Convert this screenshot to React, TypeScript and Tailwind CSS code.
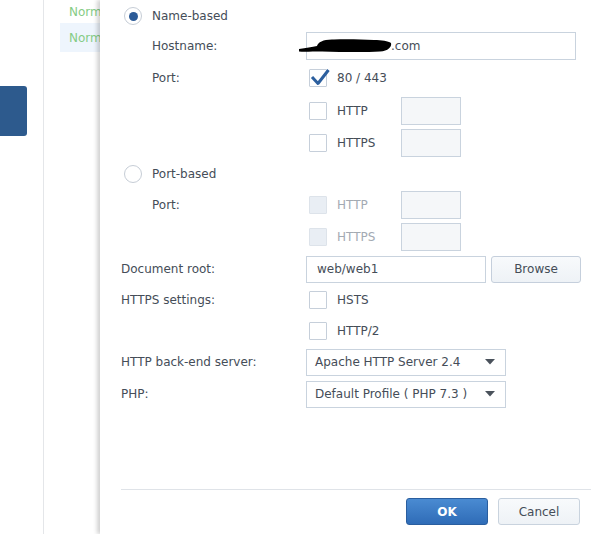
import React from "react";

const font = { fontFamily: '"DejaVu Sans", Verdana, sans-serif' };

const Checkbox = ({ checked = false, disabled = false }: { checked?: boolean; disabled?: boolean }) => (
  <div className="relative ml-[3px] shrink-0">
    <div
      className={
        disabled
          ? "w-[18px] h-[18px] rounded-[1px] border border-[#dde3ea] bg-[#e9eef4]"
          : "w-[18px] h-[18px] rounded-[1px] border border-[#c6cfda] bg-white"
      }
    />
    {checked && (
      <svg className="absolute left-[1px] top-[-1px]" width="20" height="18" viewBox="0 0 20 18">
        <path d="M2 9 L8 15.5 L18.5 2" fill="none" stroke="#2c5f9e" strokeWidth="3" strokeLinejoin="round" />
      </svg>
    )}
  </div>
);

const Radio = ({ checked = false }: { checked?: boolean }) => (
  <div className="ml-[3px] w-[18px] h-[18px] rounded-full border border-[#c6cdd6] bg-white flex items-center justify-center shrink-0">
    {checked && <div className="w-[9px] h-[9px] rounded-full bg-[#2d5c98]" />}
  </div>
);

const SmallInput = () => (
  <div className="w-[60px] h-[28px] border border-[#c9d3de] bg-[#f5f7f9]" />
);

const Select = ({ value }: { value: string }) => (
  <div className="w-[200px] h-[27px] border border-[#c9d3de] bg-white flex items-center pl-[8px] pr-[10px]">
    <span className="flex-1">{value}</span>
    <svg width="10" height="6" viewBox="0 0 10 6">
      <path d="M0 0 L10 0 L5 5.5 Z" fill="#4a525c" />
    </svg>
  </div>
);

const Row = ({
  h,
  label,
  indent = false,
  children,
}: {
  h: string;
  label?: string;
  indent?: boolean;
  children?: React.ReactNode;
}) => (
  <div className={`flex items-center ${h}`}>
    <div className={indent ? "w-[185px] pl-[31px] shrink-0" : "w-[185px] shrink-0"}>{label}</div>
    {children}
  </div>
);

export default function App() {
  return (
    <div className="w-[605px] h-[534px] flex overflow-hidden bg-white text-[12px] text-[#454d58]" style={font}>
      {/* background page */}
      <div className="w-[100px] shrink-0 flex overflow-hidden">
        <div className="w-[43px] shrink-0">
          <div className="mt-[86px] w-[27px] h-[50px] bg-[#2d5a8d] rounded-r-[3px]" />
        </div>
        <div className="flex-1 border-l border-[#e4e6e9] pl-[16px]">
          <div className="h-[23px] pl-[9px] flex items-center text-[#85cc85] whitespace-nowrap">Norm</div>
          <div className="h-[29px] pl-[9px] flex items-center bg-[#eef5fd] text-[#85cc85] whitespace-nowrap">Norm</div>
        </div>
      </div>

      {/* dialog */}
      <div className="relative z-10 flex-1 flex flex-col bg-white shadow-[-3px_0_4px_rgba(0,0,0,0.18)]">
        <div className="pl-[21px] pt-[1px] flex flex-col">
          <div className="flex items-center h-[30px]">
            <Radio checked />
            <span className="ml-[10px]">Name-based</span>
          </div>
          <Row h="h-[30px]" label="Hostname:" indent>
            <div className="relative w-[270px] h-[28px] border border-[#c9d3de] bg-white flex items-center pl-[84px]">
              <svg className="absolute left-[-9px] top-[5px]" width="96" height="16" viewBox="0 0 96 16">
                <path
                  d="M1 11 C8 10 14 9 19 8 C20 4 26 1 36 1.5 C50 1 64 1.5 76 2 C84 2 90 3 93 5 C94 9 90 13 82 13.5 C66 14.5 44 14 24 13.5 C14 13.5 6 14 1 13.5 Z"
                  fill="#000"
                />
              </svg>
              <span>.com</span>
            </div>
          </Row>
          <Row h="h-[34px]" label="Port:" indent>
            <Checkbox checked />
            <span className="ml-[10px]">80 / 443</span>
          </Row>
          <Row h="h-[32px]" indent>
            <Checkbox />
            <span className="ml-[10px] w-[64px]">HTTP</span>
            <SmallInput />
          </Row>
          <Row h="h-[32px]" indent>
            <Checkbox />
            <span className="ml-[10px] w-[64px]">HTTPS</span>
            <SmallInput />
          </Row>
          <div className="flex items-center h-[30px]">
            <Radio />
            <span className="ml-[10px]">Port-based</span>
          </div>
          <Row h="h-[32px]" label="Port:" indent>
            <Checkbox disabled />
            <span className="ml-[10px] w-[64px] text-[#a3aab3]">HTTP</span>
            <SmallInput />
          </Row>
          <Row h="h-[32px]" indent>
            <Checkbox disabled />
            <span className="ml-[10px] w-[64px] text-[#a3aab3]">HTTPS</span>
            <SmallInput />
          </Row>
          <Row h="h-[32px]" label="Document root:">
            <div className="w-[180px] h-[27px] border border-[#c9d3de] bg-white flex items-center pl-[10px]">web/web1</div>
            <button className="ml-[5px] w-[90px] h-[27px] rounded-[3px] border border-[#c5cfdc] bg-gradient-to-b from-[#f8fafc] to-[#eef2f6] text-[#454d58]">
              Browse
            </button>
          </Row>
          <Row h="h-[30px]" label="HTTPS settings:">
            <Checkbox />
            <span className="ml-[10px]">HSTS</span>
          </Row>
          <Row h="h-[32px]">
            <Checkbox />
            <span className="ml-[10px]">HTTP/2</span>
          </Row>
          <Row h="h-[30px]" label="HTTP back-end server:">
            <Select value="Apache HTTP Server 2.4" />
          </Row>
          <Row h="h-[34px]" label="PHP:">
            <Select value="Default Profile ( PHP 7.3 )" />
          </Row>
        </div>

        <div className="mt-auto ml-[21px] mr-[14px] border-t border-[#dfe3e8] pt-[8px] pb-[9px] pr-[11px] flex justify-end gap-[10px]">
          <button className="w-[82px] h-[27px] rounded-[3px] border border-[#2a5e9f] bg-gradient-to-b from-[#4a8bd2] to-[#2f6cb7] text-white font-bold">
            OK
          </button>
          <button className="w-[82px] h-[27px] rounded-[3px] border border-[#c9d3de] bg-gradient-to-b from-[#f8fafc] to-[#eef2f6] text-[#454d58]">
            Cancel
          </button>
        </div>
      </div>
    </div>
  );
}
